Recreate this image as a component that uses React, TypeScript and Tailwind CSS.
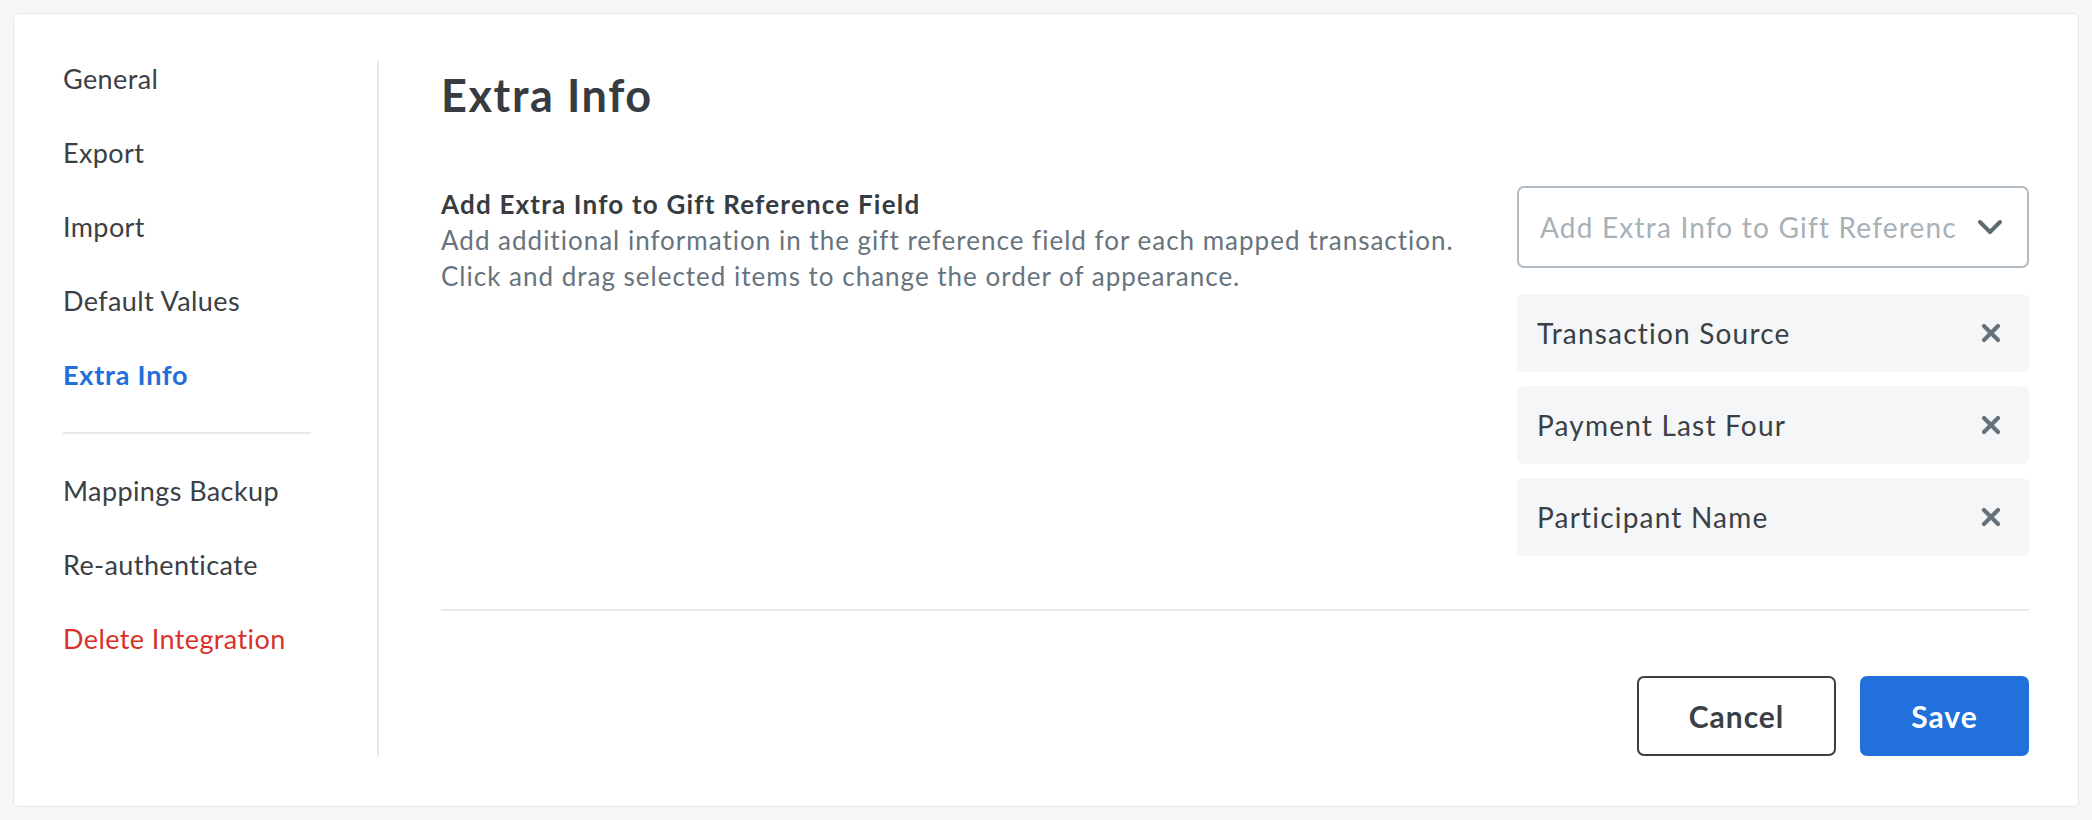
import React from 'react';

const sideTop = ['General', 'Export', 'Import', 'Default Values'];
const sideBottom = ['Mappings Backup', 'Re-authenticate'];
const chosen = ['Transaction Source', 'Payment Last Four', 'Participant Name'];

const XIcon = () => (
  <svg width="20" height="20" viewBox="0 0 20 20" fill="none" stroke="#66717a" strokeWidth="4.2" strokeLinecap="round">
    <path d="M3 3L17 17M17 3L3 17" />
  </svg>
);

const Chevron = () => (
  <svg width="26" height="16" viewBox="0 0 26 16" fill="none" stroke="#5e6a72" strokeWidth="4" strokeLinecap="round" strokeLinejoin="round">
    <path d="M3 3l10 10 10-10" />
  </svg>
);

const App: React.FC = () => {
  return (
    <div className="min-h-[820px] bg-[#f5f6f8] p-[13px] font-['Lato',sans-serif]">
      <div className="flex h-[794px] rounded-[6px] border border-[#e4e7ea] bg-white pt-[47px] pb-[50px]">
        {/* Sidebar */}
        <nav className="flex w-[365px] flex-col gap-[38px] border-r-2 border-[#e7e9eb] pl-[49px] text-[27px] leading-[36px] tracking-[0.4px] text-[#3a4045]">
          {sideTop.map((item) => (
            <div key={item}>{item}</div>
          ))}
          <div className="font-bold tracking-[0.8px] text-[#1f6fdc]">Extra Info</div>
          <div className="my-[1px] h-[2px] w-[248px] bg-[#e7e9eb]" />
          {sideBottom.map((item) => (
            <div key={item}>{item}</div>
          ))}
          <div className="text-[#d8312a]">Delete Integration</div>
        </nav>

        {/* Content */}
        <main className="flex flex-1 flex-col pl-[62px] pr-[49px]">
          <h1 className="text-[45px] font-bold leading-[68px] tracking-[1.6px] text-[#363c41]">Extra Info</h1>

          <div className="mt-[57px] flex justify-between">
            <div className="text-[26px] leading-[36px]">
              <div className="font-bold tracking-[1.2px] text-[#363c41]">Add Extra Info to Gift Reference Field</div>
              <p className="tracking-[1px] text-[#67737d]">Add additional information in the gift reference field for each mapped transaction.</p>
              <p className="tracking-[1px] text-[#67737d]">Click and drag selected items to change the order of appearance.</p>
            </div>

            <div className="flex w-[512px] flex-col">
              <div className="flex h-[82px] items-center rounded-[7px] border-2 border-[#b3bcc2] pl-[21px] pr-[24px]">
                <div className="flex-1 overflow-hidden whitespace-nowrap text-[28px] tracking-[1.2px] text-[#a7b1b8]">
                  Add Extra Info to Gift Reference Field
                </div>
                <div className="ml-[22px] flex items-center">
                  <Chevron />
                </div>
              </div>

              <div className="mt-[26px] flex flex-col gap-[14px]">
                {chosen.map((c) => (
                  <div key={c} className="flex h-[78px] items-center justify-between rounded-[6px] bg-[#f5f6f8] pl-[20px] pr-[28px]">
                    <span className="text-[28px] tracking-[1.2px] text-[#3a4045]">{c}</span>
                    <XIcon />
                  </div>
                ))}
              </div>
            </div>
          </div>

          <div className="mt-[53px] h-[2px] bg-[#e7e9eb]" />

          <div className="mt-[65px] flex justify-end gap-[24px]">
            <button className="h-[80px] w-[199px] rounded-[7px] border-2 border-[#3a4045] bg-white text-[30px] font-bold tracking-[1px] text-[#3a4045]">
              Cancel
            </button>
            <button className="h-[80px] w-[169px] rounded-[7px] bg-[#2170db] text-[30px] font-bold tracking-[1px] text-white">
              Save
            </button>
          </div>
        </main>
      </div>
    </div>
  );
};

export default App;
